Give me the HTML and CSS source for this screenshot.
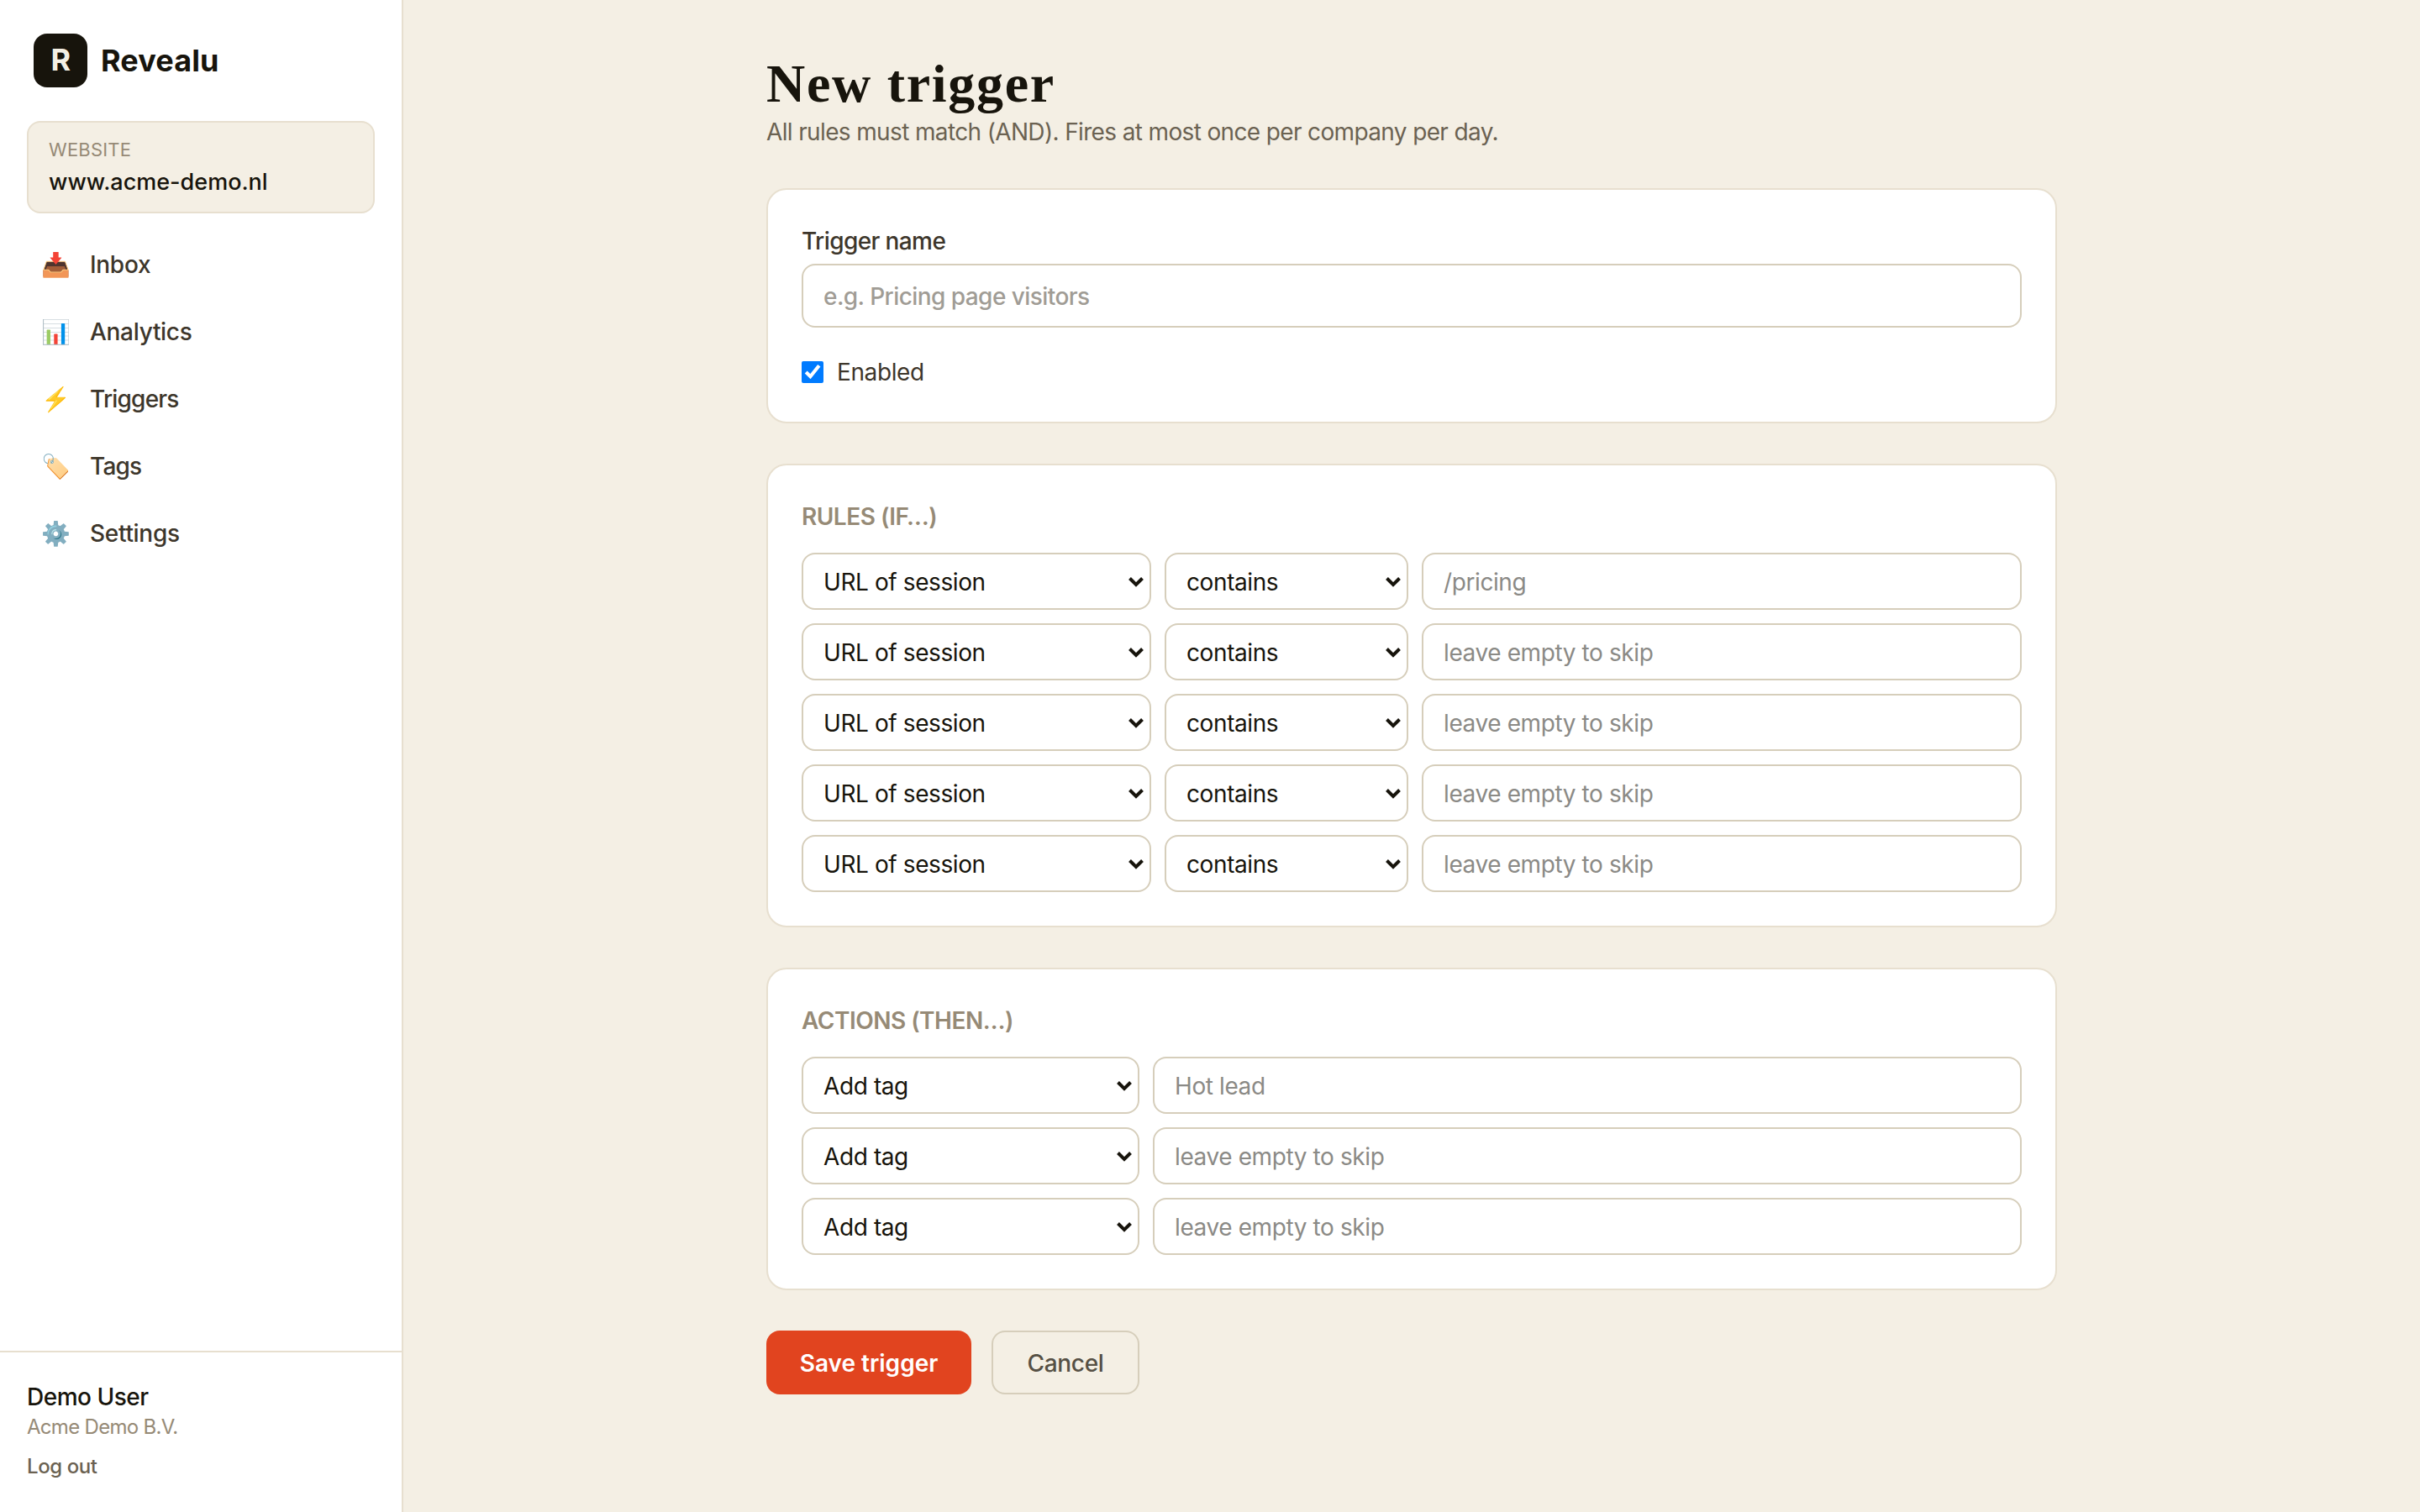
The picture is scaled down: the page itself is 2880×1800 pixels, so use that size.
FILE: index.html
```html
<!DOCTYPE html>
<html lang="en">
<head>
  <meta charset="utf-8">
  <title>New trigger - Revealu</title>
  <meta content="width=device-width, initial-scale=1" name="viewport">
  <link rel="stylesheet" href="styles.css">
</head>
<body>
  <aside class="sidebar">
    <a class="brand" href="#"><span class="logo">R</span><span class="brandName">Revealu</span></a>

    <div class="site">
      <div class="siteLabel">Website</div>
      <div class="siteName">www.acme-demo.nl</div>
    </div>

    <nav class="nav">
      <a href="#"><span class="navIcon">📥</span><span>Inbox</span></a>
      <a href="#"><span class="navIcon">📊</span><span>Analytics</span></a>
      <a href="#"><span class="navIcon">⚡</span><span class="tight">Triggers</span></a>
      <a href="#"><span class="navIcon">🏷️</span><span class="tight">Tags</span></a>
      <a href="#"><span class="navIcon">⚙️</span><span>Settings</span></a>
    </nav>

    <div class="user">
      <div class="userName">Demo User</div>
      <div class="company">Acme Demo B.V.</div>
      <a class="logout" href="#">Log out</a>
    </div>
  </aside>

  <main class="main">
    <form class="content">
      <h1>New trigger</h1>
      <p class="intro">All rules must match (AND). Fires at most once per company per day.</p>

      <section class="card nameCard">
        <label class="fieldLabel" for="name">Trigger name</label>
        <input class="nameInput" type="text" id="name" name="name" placeholder="e.g. Pricing page visitors">
        <label class="check"><input type="checkbox" name="enabled" checked><span>Enabled</span></label>
      </section>

      <section class="card">
        <h2>Rules (if…)</h2>
        <div class="rows">
          <div class="rule">
            <select name="field1"><option>URL of session</option></select>
            <select name="op1"><option>contains</option></select>
            <input type="text" name="value1" placeholder="/pricing">
          </div>
          <div class="rule">
            <select name="field2"><option>URL of session</option></select>
            <select name="op2"><option>contains</option></select>
            <input type="text" name="value2" placeholder="leave empty to skip">
          </div>
          <div class="rule">
            <select name="field3"><option>URL of session</option></select>
            <select name="op3"><option>contains</option></select>
            <input type="text" name="value3" placeholder="leave empty to skip">
          </div>
          <div class="rule">
            <select name="field4"><option>URL of session</option></select>
            <select name="op4"><option>contains</option></select>
            <input type="text" name="value4" placeholder="leave empty to skip">
          </div>
          <div class="rule">
            <select name="field5"><option>URL of session</option></select>
            <select name="op5"><option>contains</option></select>
            <input type="text" name="value5" placeholder="leave empty to skip">
          </div>
        </div>
      </section>

      <section class="card">
        <h2>Actions (then…)</h2>
        <div class="rows">
          <div class="action">
            <select name="action1"><option>Add tag</option></select>
            <input type="text" name="tag1" placeholder="Hot lead">
          </div>
          <div class="action">
            <select name="action2"><option>Add tag</option></select>
            <input type="text" name="tag2" placeholder="leave empty to skip">
          </div>
          <div class="action">
            <select name="action3"><option>Add tag</option></select>
            <input type="text" name="tag3" placeholder="leave empty to skip">
          </div>
        </div>
      </section>

      <div class="buttons">
        <button class="save" type="button">Save trigger</button>
        <button class="cancel" type="button">Cancel</button>
      </div>
    </form>
  </main>
</body>
</html>
```
FILE: styles.css
```css
* {
  box-sizing: border-box;
}
body {
  margin: 0;
  display: flex;
  min-height: 100vh;
  background: #f4efe4;
  color: #17140c;
  font-family: Inter, "Liberation Sans", sans-serif;
  font-size: 28px;
  line-height: 40px;
  letter-spacing: -0.4px;
}
a {
  color: inherit;
  text-decoration: none;
}

/* sidebar */
.sidebar {
  width: 480px;
  flex: none;
  display: flex;
  flex-direction: column;
  background: #fff;
  border-right: 2px solid #e7dfcf;
}
.brand {
  display: flex;
  align-items: center;
  gap: 16px;
  padding: 40px 40px 0;
}
.logo {
  width: 64px;
  height: 64px;
  border-radius: 16px;
  background: #17140c;
  color: #f4efe4;
  font-size: 36px;
  font-weight: 700;
  line-height: 63px;
  text-align: center;
}
.brandName {
  font-size: 36px;
  font-weight: 700;
  letter-spacing: 0.1px;
}
.site {
  height: 110px;
  margin: 40px 32px 0;
  padding: 14px 24px;
  background: #f4efe4;
  border: 2px solid #e7dfcf;
  border-radius: 16px;
}
.siteLabel {
  color: #968a76;
  font-size: 22px;
  line-height: 37px;
  letter-spacing: 0.2px;
  text-transform: uppercase;
}
.siteName {
  font-size: 27px;
  font-weight: 500;
  letter-spacing: 0;
}
.nav {
  display: flex;
  flex-direction: column;
  gap: 8px;
  padding: 24px 32px;
}
.nav a {
  display: flex;
  align-items: center;
  gap: 23px;
  height: 72px;
  padding: 2px 16px 0;
  color: #3d362b;
  font-weight: 500;
  letter-spacing: -0.3px;
}
.nav .tight {
  letter-spacing: -0.8px;
}
.navIcon {
  width: 36px;
  font-size: 28px;
  letter-spacing: 0;
  text-align: center;
}
.user {
  margin-top: auto;
  height: 192px;
  padding: 33px 32px 0;
  border-top: 2px solid #e7dfcf;
}
.userName {
  font-weight: 500;
  letter-spacing: -0.5px;
}
.company {
  color: #968a76;
  font-size: 24px;
  line-height: 32px;
  letter-spacing: -0.7px;
}
.logout {
  display: block;
  margin-top: 15px;
  color: #6b6252;
  font-size: 24px;
  font-weight: 500;
  line-height: 32px;
}

/* form */
.main {
  flex: 1;
  padding-top: 64px;
}
.content {
  width: 1536px;
  margin: 0 auto;
}
h1 {
  margin: 0;
  font-family: "Liberation Serif", serif;
  font-size: 64px;
  font-weight: 700;
  line-height: 72px;
  letter-spacing: 1.7px;
}
.intro {
  margin: 0 0 46px;
  color: #6b6252;
  line-height: 42px;
  letter-spacing: -0.64px;
}
.card {
  margin-bottom: 48px;
  padding: 40px;
  background: #fff;
  border: 2px solid #e7dfcf;
  border-radius: 24px;
}
.nameCard {
  height: 280px;
}
.fieldLabel {
  display: block;
  margin-bottom: 6px;
  color: #3d362b;
  font-weight: 500;
  line-height: 42px;
  letter-spacing: -0.6px;
}
input[type="text"], select {
  width: 100%;
  height: 68px;
  padding: 2px 24px 0;
  background-color: #fff;
  border: 2px solid #d6cebb;
  border-radius: 16px;
  color: #17140c;
  font: inherit;
  letter-spacing: inherit;
}
input::placeholder {
  color: #8b8a86;
}
input.nameInput {
  height: 76px;
  font-weight: 500;
  letter-spacing: -0.56px;
}
.nameInput::placeholder {
  color: #a09c95;
}
select {
  appearance: none;
  background-image: url("data:image/svg+xml,%3Csvg xmlns='http://www.w3.org/2000/svg' width='20' height='14' viewBox='0 0 20 14'%3E%3Cpath d='M2.5 2.5 10 10l7.500-7.500' fill='none' stroke='%2317140c' stroke-width='4'/%3E%3C/svg%3E");
  background-repeat: no-repeat;
  background-position: right 6px top 26px;
}
.check {
  display: flex;
  align-items: center;
  gap: 16px;
  margin-top: 32px;
  color: #3d362b;
  line-height: 42px;
}
.check input {
  width: 26px;
  height: 26px;
  margin: 0;
  accent-color: #007bff;
}
h2 {
  margin: 0 0 22px;
  color: #968a76;
  font-size: 28px;
  font-weight: 600;
  line-height: 42px;
  letter-spacing: -0.5px;
  text-transform: uppercase;
}
.rows {
  display: grid;
  gap: 16px;
}
.rule {
  display: grid;
  grid-template-columns: 416px 290px 1fr;
  gap: 16px;
}
.action {
  display: grid;
  grid-template-columns: 402px 1fr;
  gap: 16px;
}
.buttons {
  display: flex;
  gap: 24px;
}
button {
  height: 76px;
  padding: 1px 0 0;
  border-radius: 16px;
  font: inherit;
  cursor: pointer;
}
.save {
  width: 244px;
  border: none;
  background: #e1441f;
  color: #fff;
  font-weight: 600;
}
.cancel {
  width: 176px;
  border: 2px solid #d6cebb;
  background: transparent;
  color: #565044;
  font-weight: 500;
  letter-spacing: -0.3px;
}
```
